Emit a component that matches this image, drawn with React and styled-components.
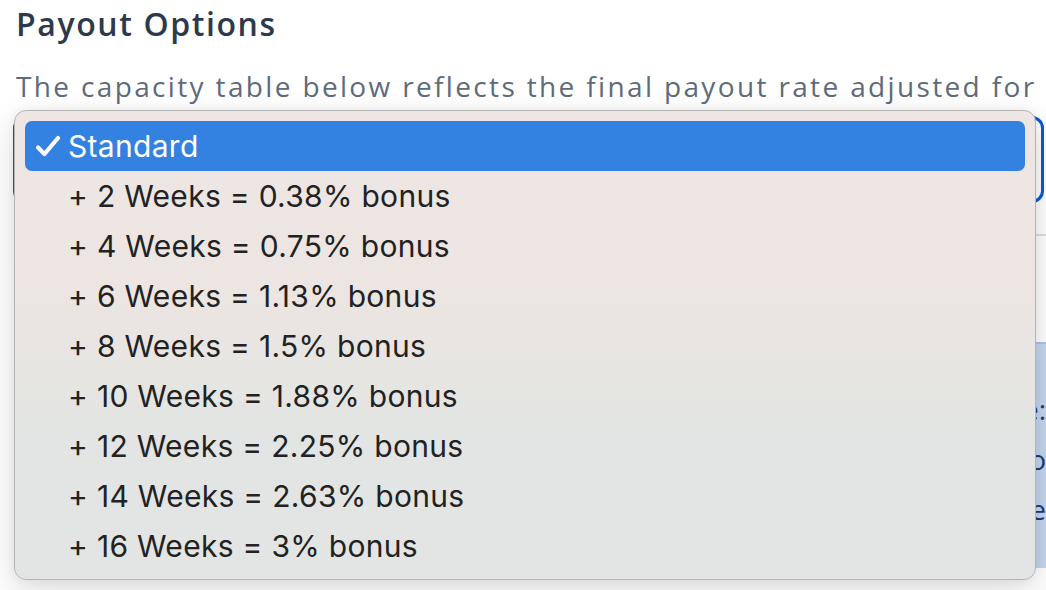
import React from 'react';
import styled, { createGlobalStyle } from 'styled-components';

const options = [
  'Standard',
  '+ 2 Weeks = 0.38% bonus',
  '+ 4 Weeks = 0.75% bonus',
  '+ 6 Weeks = 1.13% bonus',
  '+ 8 Weeks = 1.5% bonus',
  '+ 10 Weeks = 1.88% bonus',
  '+ 12 Weeks = 2.25% bonus',
  '+ 14 Weeks = 2.63% bonus',
  '+ 16 Weeks = 3% bonus',
];

const Check = () => (
  <svg width="26" height="22" viewBox="0 0 26 22">
    <path
      d="M3 12.5 L9.5 19 L23 3"
      fill="none"
      stroke="#fff"
      strokeWidth="4.2"
      strokeLinecap="round"
      strokeLinejoin="round"
    />
  </svg>
);

const App = () => {
  return (
    <Page>
      <GlobalStyle />
      <Title>Payout Options</Title>
      <Intro>The capacity table below reflects the final payout rate adjusted for</Intro>
      <SelectBox />
      <Divider />
      <Alert>
        <AlertLine>Selected option rate:</AlertLine>
        <AlertLine>Bonus applied on completio</AlertLine>
        <AlertLine>of the payout schedule</AlertLine>
      </Alert>

      <Menu>
        {options.map((opt, i) => (
          <MenuItem key={opt} selected={i === 0}>
            {i === 0 && (
              <CheckMark>
                <Check />
              </CheckMark>
            )}
            {opt}
          </MenuItem>
        ))}
      </Menu>
    </Page>
  );
};

const GlobalStyle = createGlobalStyle`
  html, body {
    margin: 0;
    padding: 0;
    background: #ffffff;
    overflow: hidden;
  }
`;

const Page = styled.div`
  position: relative;
  height: 590px;
  padding: 0 10px 0 16px;
  font-family: "Open Sans", "Noto Sans", sans-serif;
`;

const Title = styled.h2`
  margin: 0;
  padding-top: 4px;
  font-size: 32px;
  line-height: 40px;
  font-weight: 600;
  letter-spacing: 1.6px;
  color: #2c3a4b;
`;

const Intro = styled.p`
  margin: 22px 0 0;
  font-size: 28px;
  line-height: 40px;
  letter-spacing: 2.35px;
  color: #5e6b7b;
  white-space: nowrap;
`;

const SelectBox = styled.div`
  margin: 10px -8px 0 -3px;
  height: 87px;
  border: 3px solid #0a5bd6;
  border-radius: 12px;
  box-sizing: border-box;
`;

const Divider = styled.div`
  margin: 31px -10px 0 0;
  height: 2px;
  background: #dcdfe3;
`;

const Alert = styled.div`
  margin: 106px -40px 0 0;
  height: 226px;
  box-sizing: border-box;
  padding: 40px 0 0;
  background: #c5d6ee;
  border-top: 2px solid #aac2e5;
  color: #163c7c;
  font-size: 28px;
  line-height: 50px;
  text-align: right;
  overflow: hidden;
`;

const AlertLine = styled.div`
  white-space: nowrap;
  margin-right: 30px;
`;

const Menu = styled.div`
  position: absolute;
  left: 14px;
  top: 110px;
  width: 1022px;
  height: 470px;
  box-sizing: border-box;
  padding: 10px 10px;
  border: 1px solid #b4b4b4;
  border-radius: 12px;
  background: linear-gradient(180deg, #ede6e3 0%, #ece5e2 40%, #e2e5e3 70%, #e2e5e3 100%);
  box-shadow: 0 12px 34px rgba(0, 0, 0, 0.14), 0 0 10px rgba(0, 0, 0, 0.06);
  font-family: "Inter", "Liberation Sans", sans-serif;
`;

const MenuItem = styled.div`
  position: relative;
  height: 50px;
  display: flex;
  align-items: center;
  padding-left: 43px;
  border-radius: 7px;
  font-size: 30px;
  letter-spacing: 0.3px;
  color: ${({ selected }) => (selected ? '#ffffff' : '#222222')};
  background: ${({ selected }) => (selected ? '#3382e2' : 'transparent')};
`;

const CheckMark = styled.span`
  position: absolute;
  left: 10px;
  top: 14px;
  display: flex;
`;

export default App;
